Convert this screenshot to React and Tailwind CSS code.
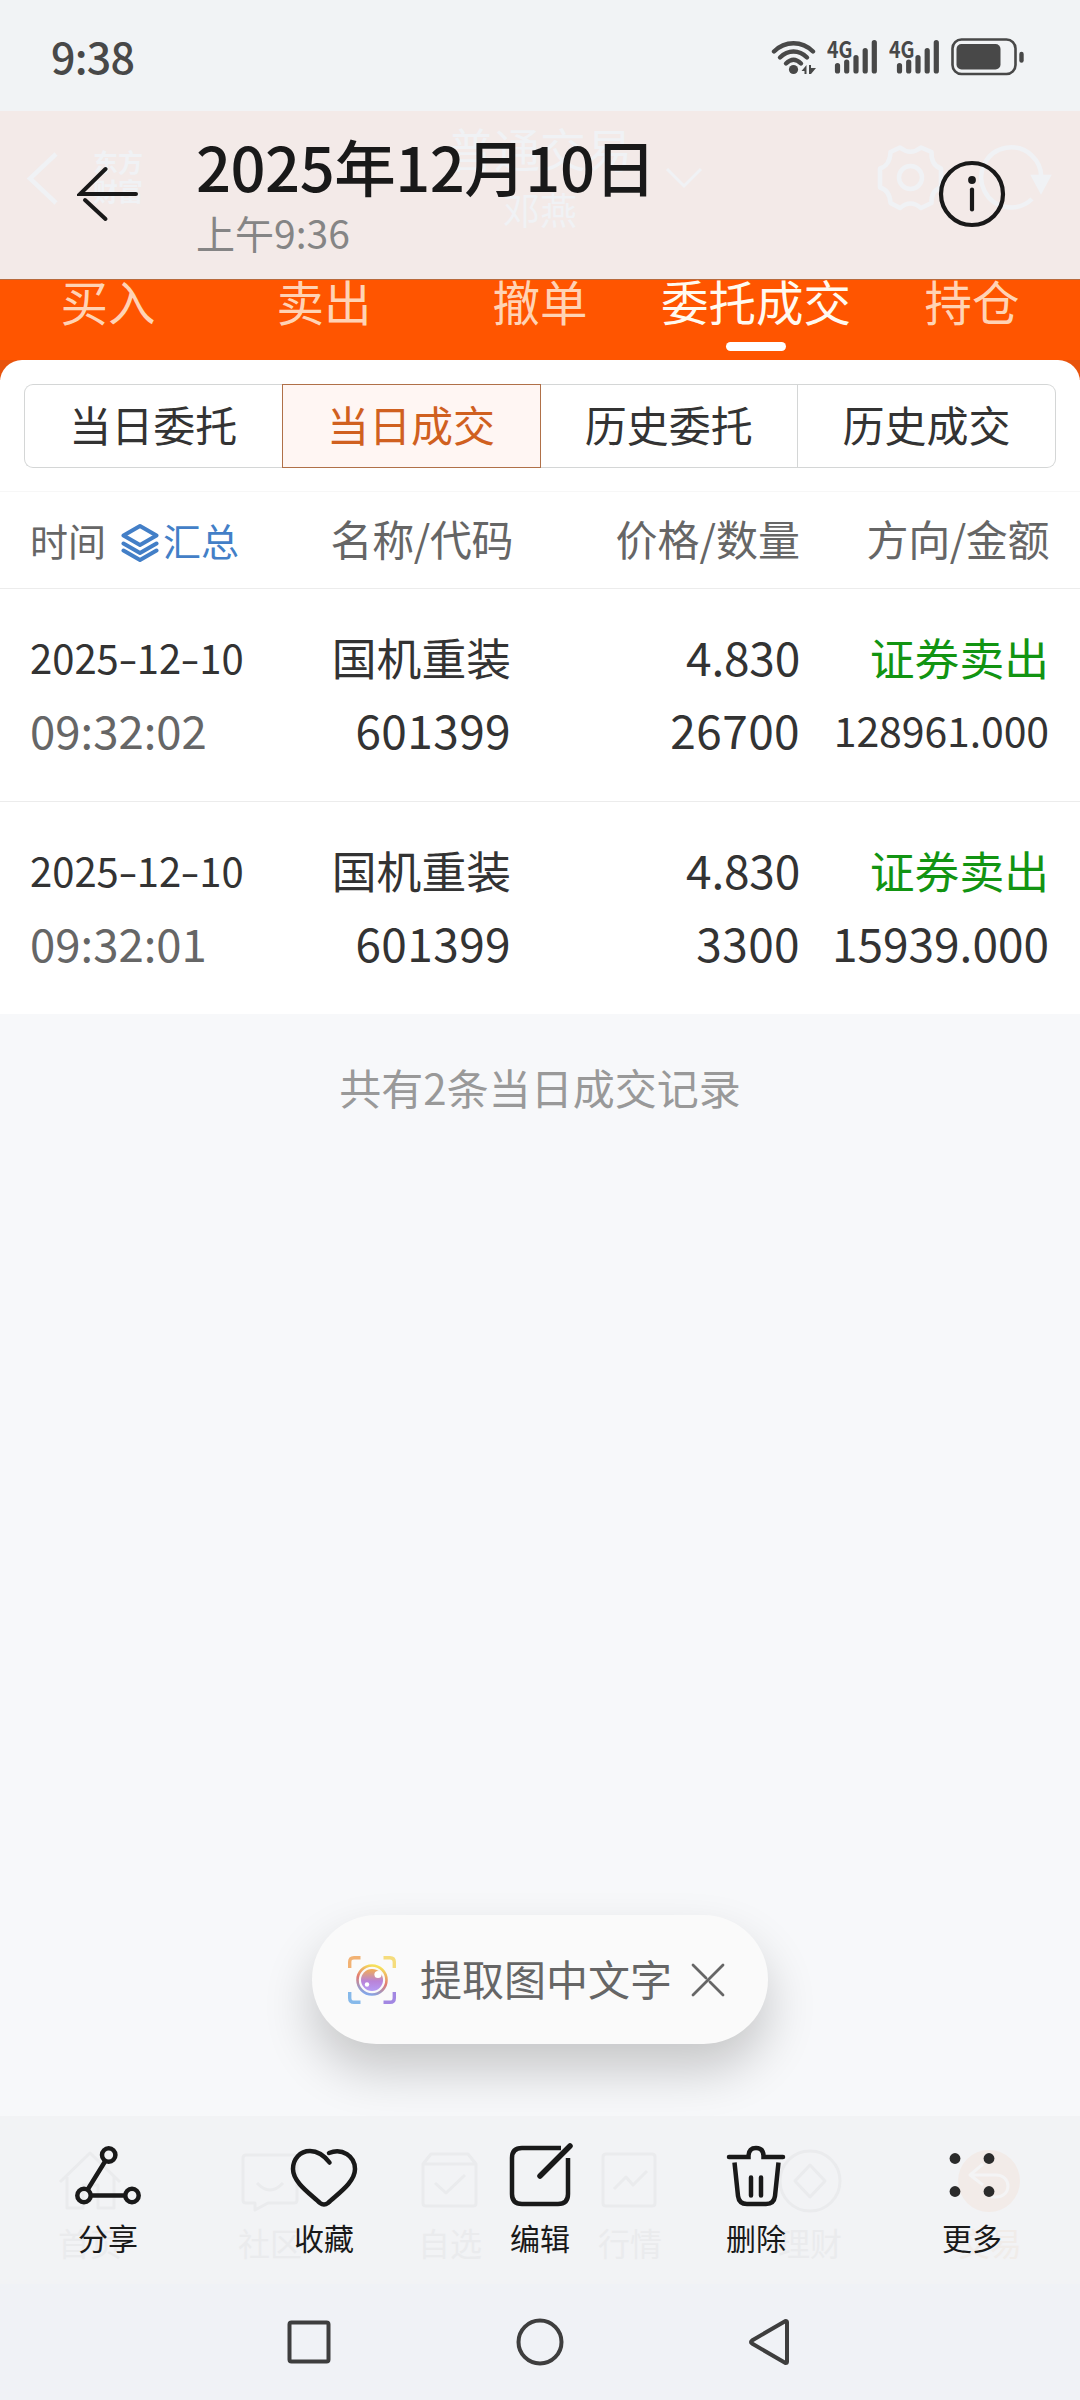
import React from "react";

const tabs = ["买入", "卖出", "撤单", "委托成交", "持仓"];
const segments = ["当日委托", "当日成交", "历史委托", "历史成交"];

const trades = [
  {
    date: ["2025", "12", "10"],
    time: "09:32:02",
    name: "国机重装",
    code: "601399",
    price: "4.830",
    amount: "26700",
    side: "证券卖出",
    total: "128961.000",
  },
  {
    date: ["2025", "12", "10"],
    time: "09:32:01",
    name: "国机重装",
    code: "601399",
    price: "4.830",
    amount: "3300",
    side: "证券卖出",
    total: "15939.000",
  },
];

function Signal() {
  return (
    <div className="relative h-[38px] w-[52px]">
      <svg width="52" height="38" viewBox="0 0 52 38">
        <path
          d="M10.500 27.500V33M19.700 24V33M29 19.500V33M38.200 12.500V33M47.300 4.500V33"
          stroke="currentColor"
          strokeWidth="5.200"
          strokeLinecap="round"
        />
      </svg>
      <span className="absolute -top-[6px] left-0 origin-left scale-x-85 text-[23px] leading-[32px] font-bold">4G</span>
    </div>
  );
}

function StatusBar() {
  return (
    <div className="flex h-[111px] items-center justify-between bg-[#f1f3f5] pl-[51px] pr-[55px] pt-[3px] text-[#484848]">
      <span className="pb-[3px] text-[43px] leading-none font-medium tracking-[-0.8px]">9:38</span>
      <div className="flex items-center">
        <svg width="46" height="38" viewBox="0 0 46 38" className="mr-[10px]">
          <g fill="none" stroke="currentColor" strokeWidth="4.400" strokeLinecap="round">
            <path d="M3 13.500C14 2.500 31 2.500 42 13.500" />
            <path d="M9 19.500C17 11.500 28 11.500 36 19.500" />
            <path d="M15 25.500C20 20.500 25 20.500 30 25.500" />
          </g>
          <circle cx="22.500" cy="31.500" r="4.600" fill="currentColor" />
          <path d="M30.500 33L35.500 27V36H33.500V33ZM38 27H40V30H45L40 36H38Z" fill="currentColor" />
        </svg>
        <div className="mr-[10px]"><Signal /></div>
        <div className="mr-[10px]"><Signal /></div>
        <svg width="74" height="38" viewBox="0 0 74 38">
          <rect x="1.500" y="1.500" width="63" height="34.500" rx="9" fill="none" stroke="currentColor" strokeWidth="2.600" />
          <rect x="5.500" y="6" width="44" height="25.500" rx="5" fill="currentColor" />
          <path d="M70.500 16V22.500" stroke="currentColor" strokeWidth="4.400" strokeLinecap="round" />
        </svg>
      </div>
    </div>
  );
}

// trading page title bar that shows faintly through the viewer header
function FadedTitleBar() {
  return (
    <div className="absolute inset-0 text-[#f0f2f5]">
      <svg width="1080" height="168" viewBox="0 0 1080 168" fill="none" stroke="currentColor" strokeWidth="4.500">
        <path d="M56 43L30 67.500L56 92" />
        <path d="M667 58L684 75L701 58" strokeWidth="3" />
        <circle cx="910.500" cy="66.500" r="11.500" />
        <path
          strokeLinejoin="round"
          d="M890.500 41L900 36.500Q910.500 45 921 36.500L931.500 41Q931 54.500 941 57.500V76.500Q931 79.500 931.500 92L921 97Q910.500 88 900 97L890.500 92Q890 79.500 880 76.500V57.500Q890 54.500 890.500 41Z"
        />
        <path d="M1041 70A30 30 0 1 0 1032 88" />
        <path d="M1034 66H1048L1041 79Z" fill="currentColor" />
      </svg>
      <span className="absolute left-[93px] top-[36px] w-[54px] text-[25px] leading-[29px] font-bold">
        东方
        <br />
        财富
      </span>
      <span className="absolute inset-x-0 top-[13px] text-center text-[46px] leading-[46px]">普通交易</span>
      <span className="absolute inset-x-0 top-[78px] text-center text-[37px] leading-[40px]">邓燕</span>
    </div>
  );
}

function ViewerHeader() {
  return (
    <header className="relative h-[168px] bg-[#f3eae8]">
      <FadedTitleBar />
      <div className="relative flex h-full items-start text-[#191919]">
        <svg width="62" height="58" viewBox="0 0 62 58" className="ml-[77px] mt-[54px]" fill="none" stroke="currentColor" strokeWidth="4" strokeLinecap="round">
          <path d="M28.500 4L3 29H59" />
          <path d="M8 35L28.500 54" />
        </svg>
        <div className="ml-[57px] mt-[20px]">
          <h1 className="text-[61.500px] leading-[70px] font-medium tracking-[-0.5px]">2025年12月10日</h1>
          <p className="mt-[9px] text-[39px] leading-[44px] text-[#858585]">上午9:36</p>
        </div>
        <svg width="68" height="68" viewBox="0 0 68 68" className="ml-auto mr-[74px] mt-[49px]">
          <circle cx="34" cy="34" r="31" fill="none" stroke="currentColor" strokeWidth="4.200" />
          <circle cx="34" cy="20" r="3.900" fill="currentColor" />
          <path d="M34 29.500V49.500" stroke="currentColor" strokeWidth="4.200" strokeLinecap="round" />
        </svg>
      </div>
    </header>
  );
}

function Tabs() {
  return (
    <div className="grid h-[81px] grid-cols-5 border-t border-[#b86a3c] bg-[#ff5500]">
      {tabs.map((tab) => {
        const active = tab === "委托成交";
        return (
          <div key={tab} className="flex flex-col items-center">
            <span
              className={`text-[47.500px] leading-[42px] whitespace-nowrap ${
                active ? "text-[#fffaf0]" : "text-[#ffd3b5]"
              }`}
            >
              {tab}
            </span>
            {active && <span className="mt-[20px] h-[9px] w-[60px] rounded-full bg-white" />}
          </div>
        );
      })}
    </div>
  );
}

function Segments() {
  return (
    <div className="flex h-[84px] text-[42px] leading-none text-[#333]">
      {segments.map((label, i) => {
        let look = "border-y border-r border-[#d4d6d6]";
        if (i === 0) look = "border-y border-l rounded-l-[9px] border-[#d4d6d6]";
        if (i === 1) look = "border border-[#b07048] bg-[#fff6f3] text-[#d0601f]";
        if (i === 3) look = "border-y border-r rounded-r-[9px] border-[#d4d6d6]";
        return (
          <div key={label} className={`flex flex-1 items-center justify-center pb-[5px] ${look}`}>
            {label}
          </div>
        );
      })}
    </div>
  );
}

function TableHead() {
  return (
    <div className="flex h-[98px] items-center border-y border-t-[#f7f7f7] border-b-[#ececec] pb-[5px] pl-[30px] pr-[31px] text-[42px] leading-none text-[#666]">
      <div className="flex w-[220px] items-center pt-[11px] text-[38px]">
        <span className="pb-[6px]">时间</span>
        <svg width="38" height="40" viewBox="0 0 38 40" className="ml-[15px] mr-1 text-[#437fc7]" fill="none" stroke="currentColor" strokeWidth="4" strokeLinejoin="round" strokeLinecap="round">
          <path d="M19 3L35.500 12.500L19 22L2.500 12.500Z" />
          <path d="M2.500 20.500L19 30L35.500 20.500" />
          <path d="M2.500 27.500L19 37L35.500 27.500" />
        </svg>
        <span className="pb-[6px] text-[#437fc7]">汇总</span>
      </div>
      <span className="w-[263px] text-right tracking-[-0.4px]">名称/代码</span>
      <span className="w-[287px] text-right">价格/数量</span>
      <span className="flex-1 text-right tracking-[-0.4px]">方向/金额</span>
    </div>
  );
}

function Dash() {
  return <span className="inline-block w-[18px] scale-x-140 text-center">-</span>;
}

function TradeRow({ trade }) {
  return (
    <div className="flex h-[213px] border-b border-[#ececec] pt-[31px] pl-[30px] pr-[31px] text-[46px] leading-[73px] text-[#333] last:h-[212px] last:border-b-0">
      <div className="w-[220px]">
        <p className="pt-px text-[40px] leading-[72px] whitespace-nowrap">
          {trade.date[0]}
          <Dash />
          {trade.date[1]}
          <Dash />
          {trade.date[2]}
        </p>
        <p className="text-[45.500px] text-[#666]">{trade.time}</p>
      </div>
      <div className="w-[261px] text-right">
        <p className="text-[44.800px]">{trade.name}</p>
        <p className="tracking-[0.4px]">{trade.code}</p>
      </div>
      <div className="w-[289px] text-right">
        <p className="tracking-[-0.2px]">{trade.price}</p>
        <p className="tracking-[0.4px]">{trade.amount}</p>
      </div>
      <div className="flex-1 text-right">
        <p className="text-[44.800px] text-[#129412]">{trade.side}</p>
        <p className={trade.total.length > 9 ? "text-[41px] tracking-[-0.1px]" : ""}>{trade.total}</p>
      </div>
    </div>
  );
}

function ExtractPill() {
  return (
    <div className="mx-auto flex h-[129px] w-[456px] items-center rounded-full bg-[#fafafa] pl-[36px] shadow-[0_26px_50px_rgba(0,0,0,0.2)]">
      <svg width="48" height="48" viewBox="0 0 48 48" fill="none">
        <defs>
          <linearGradient id="ring" x1="0.600" y1="0" x2="0.300" y2="1">
            <stop offset="0" stopColor="#f6e25a" />
            <stop offset="0.500" stopColor="#e27a72" />
            <stop offset="1" stopColor="#7fa8ee" />
          </linearGradient>
          <linearGradient id="lens" x1="0.500" y1="0" x2="0.500" y2="1">
            <stop offset="0" stopColor="#f3ae52" />
            <stop offset="0.550" stopColor="#b983d8" />
            <stop offset="1" stopColor="#b49af5" />
          </linearGradient>
        </defs>
        <g strokeWidth="3.400">
          <path d="M1.700 12V6Q1.700 1.700 6 1.700H12.500" stroke="#f2b273" />
          <path d="M35.500 1.700H42Q46.300 1.700 46.300 6V12" stroke="#f5dc7c" />
          <path d="M1.700 36V42Q1.700 46.300 6 46.300H12.500" stroke="#86b9ea" />
          <path d="M35.500 46.300H42Q46.300 46.300 46.300 42V36" stroke="#a287e2" />
        </g>
        <circle cx="24" cy="24" r="14.500" stroke="url(#ring)" strokeWidth="2.600" />
        <circle cx="24" cy="24" r="11" fill="url(#lens)" />
        <circle cx="30" cy="18.500" r="3.600" fill="#fff" />
        <circle cx="19" cy="28.500" r="2.200" fill="#fff" />
      </svg>
      <span className="ml-[24px] pb-[4px] text-[42px] leading-none text-[#666]">提取图中文字</span>
      <svg width="34" height="34" viewBox="0 0 34 34" className="ml-[19px]" fill="none" stroke="#666" strokeWidth="2.800" strokeLinecap="round">
        <path d="M32 2L2 32M2 2L15 15M19 19L32 32" />
      </svg>
    </div>
  );
}

const appNav = [
  { label: "首页", icon: <path d="M2 33L32 4L62 33M9 28V59H25V36H40V59H56V28" /> },
  {
    label: "社区",
    icon: <path d="M8 6H56Q59 6 59 9V51Q59 54 56 54H30L17 61V54H8Q5 54 5 51V9Q5 6 8 6ZM19 34Q32 48 45 34" />,
  },
  {
    label: "自选",
    icon: <path d="M5 15L13 5H50L58 15V54Q58 57 55 57H8Q5 57 5 54ZM5 15H58M17 34L28 44L47 26" />,
  },
  {
    label: "行情",
    icon: <path d="M8 5H54Q57 5 57 8V54Q57 57 54 57H8Q5 57 5 54V8Q5 5 8 5ZM16 40L28 28L35 36L49 22" />,
  },
  {
    label: "理财",
    icon: (
      <>
        <circle cx="32" cy="32" r="30" />
        <path d="M32 16L47 32L32 48L17 32Z" />
      </>
    ),
  },
  {
    label: "交易",
    trade: true,
    icon: (
      <>
        <circle cx="31" cy="32" r="31" fill="#f2ebe8" stroke="none" />
        <path d="M25 15L12 26L25 36M13 26H38C54 26 54 48 38 48H33" stroke="#f4f4f5" />
      </>
    ),
  },
];

// the app's own tab bar, almost hidden under the toolbar
function FadedAppNav() {
  return (
    <div className="absolute inset-0 grid grid-cols-6 pt-[33px] text-[#eaebed]">
      {appNav.map((item) => (
        <div key={item.label} className="flex flex-col items-center">
          <svg width="64" height="64" viewBox="0 0 64 64" fill="none" stroke="currentColor" strokeWidth="3" strokeLinejoin="round">
            {item.icon}
          </svg>
          <span className={`mt-[12px] text-[32px] leading-[34px] ${item.trade ? "text-[#f0ece9]" : ""}`}>
            {item.label}
          </span>
        </div>
      ))}
    </div>
  );
}

const actions = [
  {
    label: "分享",
    icon: (
      <>
        <circle cx="36.700" cy="14" r="6.700" />
        <circle cx="12" cy="54.500" r="6.700" />
        <circle cx="60" cy="54.500" r="6.700" />
        <path d="M33 20.500L16 48M19.500 54.500H52.500" />
      </>
    ),
  },
  {
    label: "收藏",
    icon: (
      <path d="M41.500 21.500C35 13 28 10 22 10C12 10 5 18 5 28C5 42 24 54 32 62Q36 65 40 62C48 54 67 42 67 28C67 15 54 6.500 41 12" />
    ),
  },
  {
    label: "编辑",
    icon: (
      <>
        <path d="M57 7H18Q8 7 8 17V53Q8 63 18 63H54Q64 63 64 53V17" strokeLinecap="butt" />
        <path d="M36 35L66 5" strokeWidth="5.500" />
      </>
    ),
  },
  {
    label: "删除",
    icon: (
      <>
        <path d="M9 16H28.500V14.500Q29 7 36 7Q43 7 43.500 14.500V16H63" />
        <path d="M14.500 21.500L18 55Q19 63 27 63H46Q54 63 55 55L58.500 21.500" strokeLinecap="butt" />
        <path d="M31 36.500V54.500M41 36.500V54.500" />
      </>
    ),
  },
  {
    label: "更多",
    icon: (
      <g fill="#2b2b2b" stroke="none">
        <circle cx="19" cy="17.500" r="5.400" />
        <circle cx="53" cy="17.500" r="5.400" />
        <circle cx="19" cy="50.500" r="5.400" />
        <circle cx="53" cy="50.500" r="5.400" />
      </g>
    ),
  },
];

function Toolbar() {
  return (
    <div className="relative h-[168px] bg-[#f2f3f5]">
      <FadedAppNav />
      <div className="relative grid grid-cols-5 pt-[25px] text-[#191919]">
        {actions.map((action) => (
          <div key={action.label} className="flex flex-col items-center">
            <svg width="72" height="70" viewBox="0 0 72 70" fill="none" stroke="currentColor" strokeWidth="4.500" strokeLinecap="round">
              {action.icon}
            </svg>
            <span className="mt-[9px] text-[30px] leading-[34px]">{action.label}</span>
          </div>
        ))}
      </div>
    </div>
  );
}

function SystemNav() {
  return (
    <div className="flex h-[116px] items-start justify-center gap-[181px] bg-[#f0f2f6] pt-[33px]">
      <svg width="50" height="50" viewBox="0 0 50 50" fill="none" stroke="#3e3e3e" strokeWidth="4">
        <rect x="5.500" y="5.500" width="39" height="39" rx="2" />
      </svg>
      <svg width="50" height="50" viewBox="0 0 50 50" fill="none" stroke="#3e3e3e" strokeWidth="4">
        <circle cx="25" cy="25" r="21.500" />
      </svg>
      <svg width="50" height="50" viewBox="0 0 50 50" fill="none" stroke="#3e3e3e" strokeWidth="4" strokeLinejoin="round">
        <path d="M6 23.500L39.500 4Q41 4 41 5.500V44.500Q41 46 39.500 46L6 26.500Q4 25 6 23.500Z" />
      </svg>
    </div>
  );
}

function App() {
  return (
    <div className="flex h-[2400px] w-[1080px] flex-col overflow-hidden bg-[#f7f8fa] font-['Noto_Sans_CJK_SC',sans-serif]">
      <StatusBar />
      <ViewerHeader />
      <Tabs />
      <div className="bg-linear-to-b from-[#e8530c] from-[20px] to-white to-[20px]">
        <div className="rounded-t-[22px] bg-white">
          <div className="px-[24px] pt-[24px] pb-[23px]">
            <Segments />
          </div>
          <TableHead />
          {trades.map((trade) => (
            <TradeRow key={trade.time} trade={trade} />
          ))}
        </div>
      </div>
      <p className="mt-[51px] text-center text-[42px] leading-[44px] text-[#999]">共有2条当日成交记录</p>
      <div className="mt-auto pb-[72px]">
        <ExtractPill />
      </div>
      <Toolbar />
      <SystemNav />
    </div>
  );
}

export default App;
